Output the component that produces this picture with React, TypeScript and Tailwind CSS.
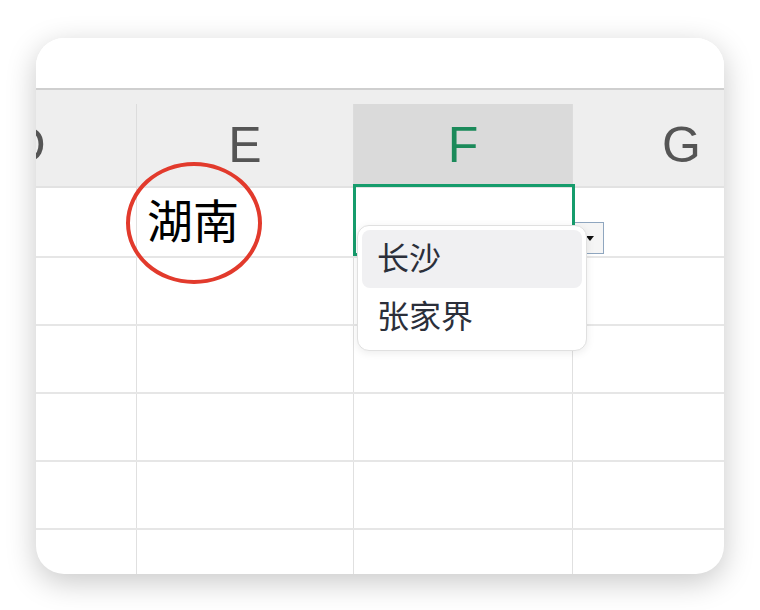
import React from 'react';

const cols = [
  { key: 'D', w: 'w-[218px]' },
  { key: 'E', w: 'w-[217px]' },
  { key: 'F', w: 'w-[219px]' },
  { key: 'G', w: 'w-[218px]' },
];

function ArrowButton() {
  return (
    <div className="absolute left-[219px] top-[34px] w-[31px] h-[32px] border border-[#8fa6bf] bg-[#f5f5f5] flex items-center justify-center">
      <svg width="8" height="5" viewBox="0 0 8 5" className="ml-[2px]">
        <path d="M0 0 H8 L4 5 Z" fill="#111" />
      </svg>
    </div>
  );
}

function Dropdown() {
  return (
    <div className="absolute left-[3px] top-[37px] w-[230px] h-[126px] z-20 bg-white border border-[#e0e0e0] rounded-[12px] shadow-[0_2px_8px_rgba(0,0,0,0.08)] p-[4px] flex flex-col">
      <div className="h-[58px] rounded-[8px] bg-[#f0f0f2] flex items-center pl-[15px] text-[32px] text-[#2b2f3a]">
        长沙
      </div>
      <div className="h-[58px] flex items-center pl-[15px] text-[32px] text-[#2b2f3a]">
        张家界
      </div>
    </div>
  );
}

export default function App() {
  const rows = [0, 1, 2, 3, 4, 5];

  return (
    <div
      className="w-[760px] h-[610px] bg-white pt-[38px] pl-[36px]"
      style={{ fontFamily: '"Liberation Sans", "Noto Sans CJK SC", sans-serif' }}
    >
      <div className="relative w-[688px] h-[536px] rounded-[28px] overflow-hidden bg-white shadow-[0_8px_30px_rgba(0,0,0,0.22)]">
        {/* toolbar strip */}
        <div className="h-[52px] bg-white border-b-2 border-[#cfcfcf]" />

        {/* column headers */}
        <div className="bg-[#eeeeee] pt-[14px] border-b-2 border-[#e2e2e2]">
          <div className="flex ml-[-117px] h-[82px]">
            {cols.map((c) => (
              <div
                key={c.key}
                className={`${c.w} shrink-0 flex items-center justify-center border-r border-[#dcdcdc] text-[50px] ${
                  c.key === 'F' ? 'bg-[#dadada] text-[#1b8a5a]' : 'text-[#555555]'
                }`}
              >
                {c.key}
              </div>
            ))}
          </div>
        </div>

        {/* body rows */}
        {rows.map((r) => (
          <div key={r} className={`flex ml-[-117px] h-[68px] ${r > 0 ? 'border-t-2 border-[#e6e6e6]' : ''}`}>
            {cols.map((c) => (
              <div key={c.key} className={`${c.w} shrink-0 relative border-r border-[#e0e0e0]`}>
                {r === 0 && c.key === 'E' && (
                  <>
                    <div className="h-full flex items-center pl-[10px] text-[46px] text-black">湖南</div>
                    <div className="absolute left-[-11px] top-[-26px] w-[136px] h-[122px] rounded-[50%] border-[4px] border-[#e23a2c] z-10" />
                  </>
                )}
                {r === 0 && c.key === 'F' && (
                  <>
                    <div className="absolute left-[-1px] top-[-4px] w-[222px] h-[72px] border-[3px] border-[#169c6c] z-10" />
                    <ArrowButton />
                    <Dropdown />
                  </>
                )}
              </div>
            ))}
          </div>
        ))}
      </div>
    </div>
  );
}
